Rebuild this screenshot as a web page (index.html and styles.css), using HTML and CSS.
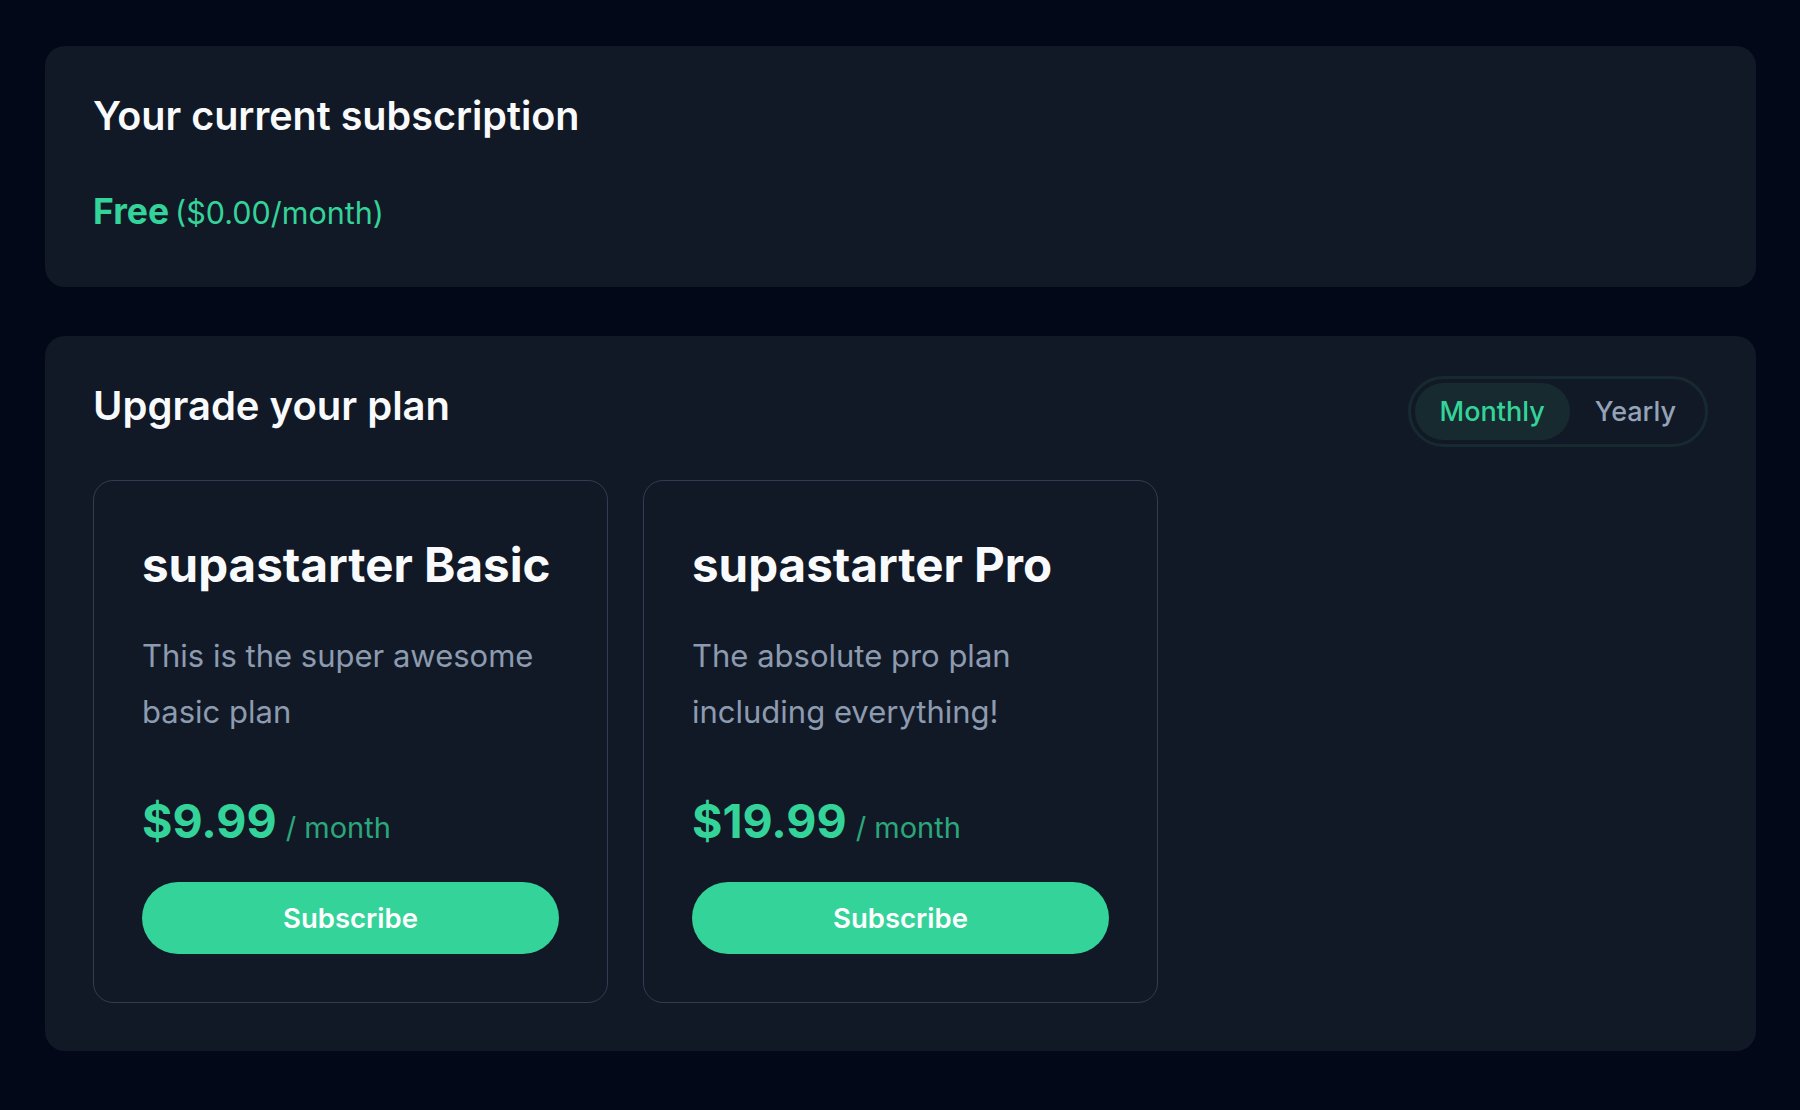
FILE: index.html
```html
<!DOCTYPE html>
<html lang="en">
<head>
<meta charset="utf-8">
<title>Billing</title>
<link rel="stylesheet" href="styles.css">
</head>
<body>
<main class="page">
  <section class="panel current">
    <h2 class="panel-title">Your current subscription</h2>
    <p class="current-plan"><strong class="plan-name">Free</strong><span class="plan-price">($0.00/month)</span></p>
  </section>

  <section class="panel upgrade">
    <header class="upgrade-head">
      <h2 class="panel-title upgrade-title">Upgrade your plan</h2>
      <div class="toggle">
        <button class="toggle-btn is-active">Monthly</button>
        <button class="toggle-btn">Yearly</button>
      </div>
    </header>
    <div class="plans">
      <article class="plan">
        <h3 class="plan-title">supastarter Basic</h3>
        <p class="plan-desc">This is the super awesome basic plan</p>
        <p class="plan-cost"><strong class="amount">$9.99</strong><span class="interval">/ month</span></p>
        <button class="subscribe">Subscribe</button>
      </article>
      <article class="plan">
        <h3 class="plan-title">supastarter Pro</h3>
        <p class="plan-desc">The absolute pro plan including everything!</p>
        <p class="plan-cost"><strong class="amount">$19.99</strong><span class="interval">/ month</span></p>
        <button class="subscribe">Subscribe</button>
      </article>
    </div>
  </section>
</main>
</body>
</html>
```

FILE: styles.css
```css
* { box-sizing: border-box; }
html, body { margin: 0; }
body {
  background: #020817;
  font-family: Inter, "Noto Sans", sans-serif;
  color: #f8fafc;
}
.page {
  padding: 46px 44px 46px 45px;
  display: flex;
  flex-direction: column;
  gap: 49px;
}
.panel {
  background: #121926;
  border-radius: 20px;
  padding: 46px 48px 52px;
}
.panel-title {
  margin: 0;
  font-size: 39.5px;
  line-height: 48px;
  font-weight: 600;
}
.upgrade-title { font-size: 40px; }
.current-plan {
  margin: 49px 0 0;
  color: #34d399;
  font-size: 35px;
  line-height: 44px;
}
.plan-name { font-size: 35.5px; font-weight: 700; }
.plan-price { font-size: 30.5px; font-weight: 400; margin-left: 6px; }
.upgrade { padding: 40px 48px 48px; }
.upgrade-head {
  display: flex;
  align-items: flex-start;
  justify-content: space-between;
}
.upgrade-title { padding-top: 6px; }
.toggle {
  display: flex;
  padding: 4px;
  border: 3px solid #172a30;
  border-radius: 999px;
}
.toggle-btn {
  font-family: inherit;
  font-size: 27px;
  font-weight: 500;
  height: 57px;
  padding: 0 25px;
  border: 0;
  border-radius: 999px;
  background: transparent;
  color: #94a3b8;
}
.toggle-btn.is-active { background: #162a30; color: #34d399; }
.plans {
  margin-top: 33px;
  display: grid;
  grid-template-columns: repeat(3, 1fr);
  gap: 35px;
}
.plan {
  border: 1px solid #303d52;
  border-radius: 20px;
  padding: 48px;
}
.plan-title {
  margin: 0;
  font-size: 47.5px;
  line-height: 72px;
  font-weight: 700;
}
.plan-desc {
  margin: 27px 0 0;
  font-size: 31px;
  line-height: 56px;
  color: #8d9bb0;
}
.plan-cost {
  margin: 53px 0 0;
  color: #34d399;
  line-height: 56px;
}
.amount { font-size: 46.5px; font-weight: 700; }
.interval { font-size: 29px; color: #2aa77b; margin-left: 9px; }
.subscribe {
  display: block;
  width: 100%;
  margin-top: 22px;
  height: 72px;
  border: 0;
  border-radius: 999px;
  background: #34d399;
  color: #fff;
  font-family: inherit;
  font-size: 27.5px;
  font-weight: 600;
}
```
